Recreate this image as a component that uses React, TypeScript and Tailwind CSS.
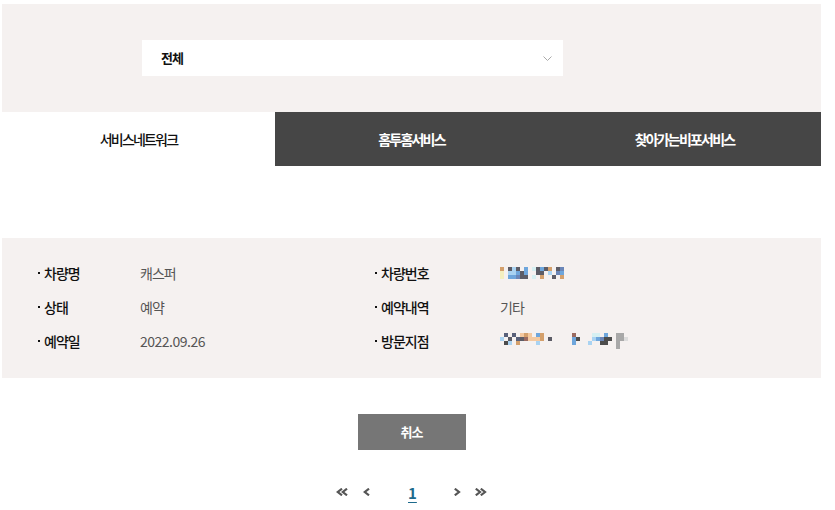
import React from "react";

const FONT = { fontFamily: '"Noto Sans CJK KR", "Noto Sans", sans-serif' };

const palette: Record<string, string> = {
  t: "#d4a06c",
  y: "#f4efc0",
  b: "#a9d3f2",
  B: "#6ea6dc",
  g: "#5c5c66",
  S: "#6a86b8",
  L: "#d6f0f2",
  p: "#f4c9a0",
  r: "#9a6a60",
  k: "#4c4c4c",
  q: "#a8a8a8",
  w: "#dcdcdc",
  v: "#58607a",
};

function Mosaic({ rows, cell = 4 }: { rows: string[]; cell?: number }) {
  const w = Math.max(...rows.map((r) => r.length)) * cell;
  const h = rows.length * cell;
  return (
    <svg width={w} height={h} className="block">
      {rows.flatMap((row, ri) =>
        row.split("").map((c, ci) =>
          palette[c] ? (
            <rect key={`${ri}-${ci}`} x={ci * cell} y={ri * cell} width={cell} height={cell} fill={palette[c]} />
          ) : null
        )
      )}
    </svg>
  );
}

function Label({ children, w }: { children: React.ReactNode; w: string }) {
  return (
    <div className={`flex items-center ${w} shrink-0 text-[14px] font-medium text-[#111] tracking-[-1px]`}>
      <span className="w-[2px] h-[2px] bg-[#111] mr-[4px]" />
      {children}
    </div>
  );
}

function Chev({ dir, double }: { dir: "l" | "r"; double?: boolean }) {
  const one = (off: number) =>
    dir === "l"
      ? `M${off + 6} 0.7 L${off + 1.8} 4 L${off + 6} 7.3`
      : `M${off + 1.8} 0.7 L${off + 6} 4 L${off + 1.8} 7.3`;
  const w = double ? 13 : 8;
  return (
    <svg width={w} height={8} viewBox={`0 0 ${w} 8`} className="block">
      <path d={one(0)} stroke="#555" strokeWidth={2.2} fill="none" />
      {double && <path d={one(5)} stroke="#555" strokeWidth={2.2} fill="none" />}
    </svg>
  );
}

export default function App() {
  return (
    <div className="w-[835px] h-[510px] bg-white overflow-hidden" style={FONT}>
      <div className="ml-[2px] w-[819px] pt-[4px]">
        <div className="bg-[#f5f1f0] h-[108px] flex items-center pl-[140px]">
          <div className="w-[421px] h-[36px] bg-white flex items-center justify-between pl-[19px] pr-[11px]">
            <span className="text-[13px] font-bold text-[#111] tracking-[-1px]">전체</span>
            <svg width="9" height="5" viewBox="0 0 9 5" className="block">
              <path d="M0.5 0.5 L4.5 4.5 L8.5 0.5" stroke="#aaa" strokeWidth="1" fill="none" />
            </svg>
          </div>
        </div>
        <div className="grid grid-cols-3 h-[54px]">
          <div className="flex items-center justify-center bg-white text-[14px] font-medium text-[#111] tracking-[-1.8px]">
            서비스네트워크
          </div>
          <div className="flex items-center justify-center bg-[#464646] text-[14px] font-bold text-white tracking-[-1.8px]">
            홈투홈서비스
          </div>
          <div className="flex items-center justify-center bg-[#464646] text-[14px] font-bold text-white tracking-[-1.8px]">
            찾아가는비포서비스
          </div>
        </div>

        <div className="mt-[72px] bg-[#f5f1f0] pt-[18px] pb-[20px] pl-[36px]">
          <div className="flex h-[34px] items-center">
            <div className="flex w-[337px] items-center">
              <Label w="w-[102px]">차량명</Label>
              <span className="text-[14px] text-[#555] tracking-[-1px]">캐스퍼</span>
            </div>
            <div className="flex items-center">
              <Label w="w-[125px]">차량번호</Label>
              <Mosaic
                rows={[
                  "t.gbg.B.LgBgt.gS.",
                  "y.bbBgB..gg.b.SB.",
                  "y.BBSgg.L.t..g.t.",
                ]}
              />
            </div>
          </div>
          <div className="flex h-[34px] items-center">
            <div className="flex w-[337px] items-center">
              <Label w="w-[102px]">상태</Label>
              <span className="text-[14px] text-[#555] tracking-[-1px]">예약</span>
            </div>
            <div className="flex items-center">
              <Label w="w-[125px]">예약내역</Label>
              <span className="text-[14px] text-[#555] tracking-[-1px]">기타</span>
            </div>
          </div>
          <div className="flex h-[34px] items-center">
            <div className="flex w-[337px] items-center">
              <Label w="w-[102px]">예약일</Label>
              <span className="text-[14px] text-[#555] tracking-[-0.5px]">2022.09.26</span>
            </div>
            <div className="flex items-center">
              <Label w="w-[125px]">방문지점</Label>
              <Mosaic
                rows={[
                  ".v.v.ptp.Bt.......r....LL.B..qq.",
                  "b.g.vgrpppt.g.....Bk...bBSkk.qqw",
                  ".kb.t....b........B...b..kk..q..",
                  ".............................q..",
                ]}
              />
            </div>
          </div>
        </div>

        <div className="flex justify-center mt-[36px]">
          <button className="w-[108px] h-[36px] bg-[#767676] text-white text-[13px] font-bold tracking-[-1px]">
            취소
          </button>
        </div>

        <div className="flex items-center justify-center mt-[36px] h-[12px]">
          <Chev dir="l" double />
          <div className="ml-[14px]">
            <Chev dir="l" />
          </div>
          <span className="ml-[37px] mr-[37px] w-[8px] text-center text-[15px] font-bold text-[#1d6a8c] underline underline-offset-[3px] leading-none">
            1
          </span>
          <Chev dir="r" />
          <div className="ml-[13px]">
            <Chev dir="r" double />
          </div>
        </div>
      </div>
    </div>
  );
}
